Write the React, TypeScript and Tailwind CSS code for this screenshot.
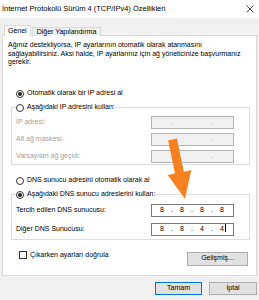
import React from 'react';

const font = { fontFamily: '"Liberation Sans", Arial, sans-serif' };

function Radio({ checked }: { checked?: boolean }) {
  return (
    <span className="w-[8px] h-[8px] rounded-full border border-[#333] bg-white flex items-center justify-center shrink-0">
      {checked && <span className="w-[4px] h-[4px] rounded-full bg-[#222]" />}
    </span>
  );
}

function RadioRow({ checked, label }: { checked?: boolean; label: string }) {
  return (
    <div className="flex items-center gap-[3px] h-[10px] text-[7px] text-black bg-white">
      <Radio checked={checked} />
      <span className="whitespace-nowrap">{label}</span>
    </div>
  );
}

function IpBox({ values, disabled, caret }: { values?: string[]; disabled?: boolean; caret?: boolean }) {
  const cells = values ?? ['', '', '', ''];
  return (
    <div
      className={
        'w-[83px] h-[13px] border flex items-center pl-0 text-[7px] ' +
        (disabled ? 'border-[#b4b4b4] bg-[#f0f0f0] text-[#999]' : 'border-[#7a7a7a] bg-white text-black')
      }
    >
      {cells.map((v, i) => (
        <React.Fragment key={i}>
          {i > 0 && <span className="w-0 flex justify-center">.</span>}
          <span className="w-[20px] flex justify-center relative">
            {v}
            {caret && i === 3 && <span className="absolute left-[13px] top-[0px] w-px h-[8px] bg-black" />}
          </span>
        </React.Fragment>
      ))}
    </div>
  );
}

function FieldRow({ label, disabled, children }: { label: string; disabled?: boolean; children: React.ReactNode }) {
  return (
    <div className="flex items-center justify-between h-[13px] pl-[4px] pr-[15px]">
      <span className={'text-[7px] whitespace-nowrap ' + (disabled ? 'text-[#a0a0a0]' : 'text-black')}>{label}</span>
      {children}
    </div>
  );
}

export default function App() {
  return (
    <div className="w-[259px] h-[300px] bg-[#f0f0f0] flex flex-col relative overflow-hidden" style={font}>
      {/* title bar */}
      <div className="h-[18px] bg-white flex items-center justify-between pl-[2px] pr-[5px] shrink-0">
        <span className="text-[7.5px] text-black whitespace-nowrap">İnternet Protokolü Sürüm 4 (TCP/IPv4) Özellikleri</span>
        <svg width="8" height="8" viewBox="0 0 8 8">
          <path d="M0.5 0.5 L7.5 7.5 M7.5 0.5 L0.5 7.5" stroke="#222" strokeWidth="0.8" fill="none" />
        </svg>
      </div>

      {/* tabs */}
      <div className="flex items-end pl-[4px] mt-[7px] h-[11px] shrink-0 relative z-10">
        <div className="h-[11px] px-[3px] bg-white border border-b-0 border-[#d9d9d9] flex items-center text-[7px] text-black">
          Genel
        </div>
        <div className="h-[9px] ml-[1px] px-[4px] bg-[#f0f0f0] border border-b-0 border-[#d9d9d9] flex items-center text-[7px] text-black">
          Diğer Yapılandırma
        </div>
      </div>

      {/* panel */}
      <div className="mx-[2px] -mt-px h-[241px] bg-white border border-[#d9d9d9] pl-[5px] pr-[6px] pt-[5px] flex flex-col shrink-0">
        <p className="text-[7px] leading-[8.5px] text-black">
          Ağınız destekliyorsa, IP ayarlarının otomatik olarak atanmasını sağlayabilirsiniz. Aksi halde, IP ayarlarınız için ağ yöneticinize başvurmanız gerekir.
        </p>

        <div className="mt-[22px] ml-[8px]">
          <RadioRow checked label="Otomatik olarak bir IP adresi al" />
        </div>

        <fieldset className="mt-[4px] ml-[3px] border border-[#dcdcdc] px-[4px] pb-[1px] flex flex-col gap-[4px]">
          <legend>
            <RadioRow label="Aşağıdaki IP adresini kullan:" />
          </legend>
          <div className="flex flex-col gap-[4px] -ml-[4px] -mr-[4px] pt-[3px]">
            <FieldRow label="IP adresi:" disabled>
              <IpBox disabled />
            </FieldRow>
            <FieldRow label="Alt ağ maskesi:" disabled>
              <IpBox disabled />
            </FieldRow>
            <FieldRow label="Varsayılan ağ geçidi:" disabled>
              <IpBox disabled />
            </FieldRow>
          </div>
        </fieldset>

        <div className="mt-[11px] ml-[8px]">
          <RadioRow label="DNS sunucu adresini otomatik olarak al" />
        </div>

        <fieldset className="mt-[4px] ml-[3px] border border-[#dcdcdc] px-[4px] pb-[3px]">
          <legend>
            <RadioRow checked label="Aşağıdaki DNS sunucu adreslerini kullan:" />
          </legend>
          <div className="flex flex-col gap-[6px] -ml-[4px] -mr-[4px] pt-[4px]">
            <FieldRow label="Tercih edilen DNS sunucusu:">
              <IpBox values={['8', '8', '8', '8']} />
            </FieldRow>
            <FieldRow label="Diğer DNS Sunucusu:">
              <IpBox values={['8', '8', '4', '4']} caret />
            </FieldRow>
          </div>
        </fieldset>

        <div className="mt-[12px] flex items-start justify-between pl-[11px] pr-[2px]">
          <div className="flex items-center gap-[3px] h-[9px] mt-[-1px]">
            <span className="w-[8px] h-[8px] border border-[#333] bg-white shrink-0" />
            <span className="text-[7px] text-black whitespace-nowrap">Çıkarken ayarları doğrula</span>
          </div>
          <button className="w-[61px] h-[14px] bg-[#e1e1e1] border border-[#adadad] text-[7px] text-black flex items-center justify-center">
            Gelişmiş...
          </button>
        </div>
      </div>

      {/* bottom buttons */}
      <div className="flex justify-end gap-[7px] pr-[2px] mt-[6px]">
        <button className="w-[47px] h-[13px] bg-[#e1e1e1] border border-[#0078d7] text-[7px] text-black flex items-center justify-center">
          Tamam
        </button>
        <button className="w-[48px] h-[13px] bg-[#e1e1e1] border border-[#adadad] text-[7px] text-black flex items-center justify-center">
          İptal
        </button>
      </div>

      {/* orange arrow overlay */}
      <svg className="absolute left-0 top-0 pointer-events-none" width="259" height="300" viewBox="0 0 259 300">
        <polygon
          points="168.1,140.4 176.9,138.6 183.8,171.7 191.2,170.1 185,199 167.7,175.1 175,173.5"
          fill="#f5821f"
        />
      </svg>
    </div>
  );
}
